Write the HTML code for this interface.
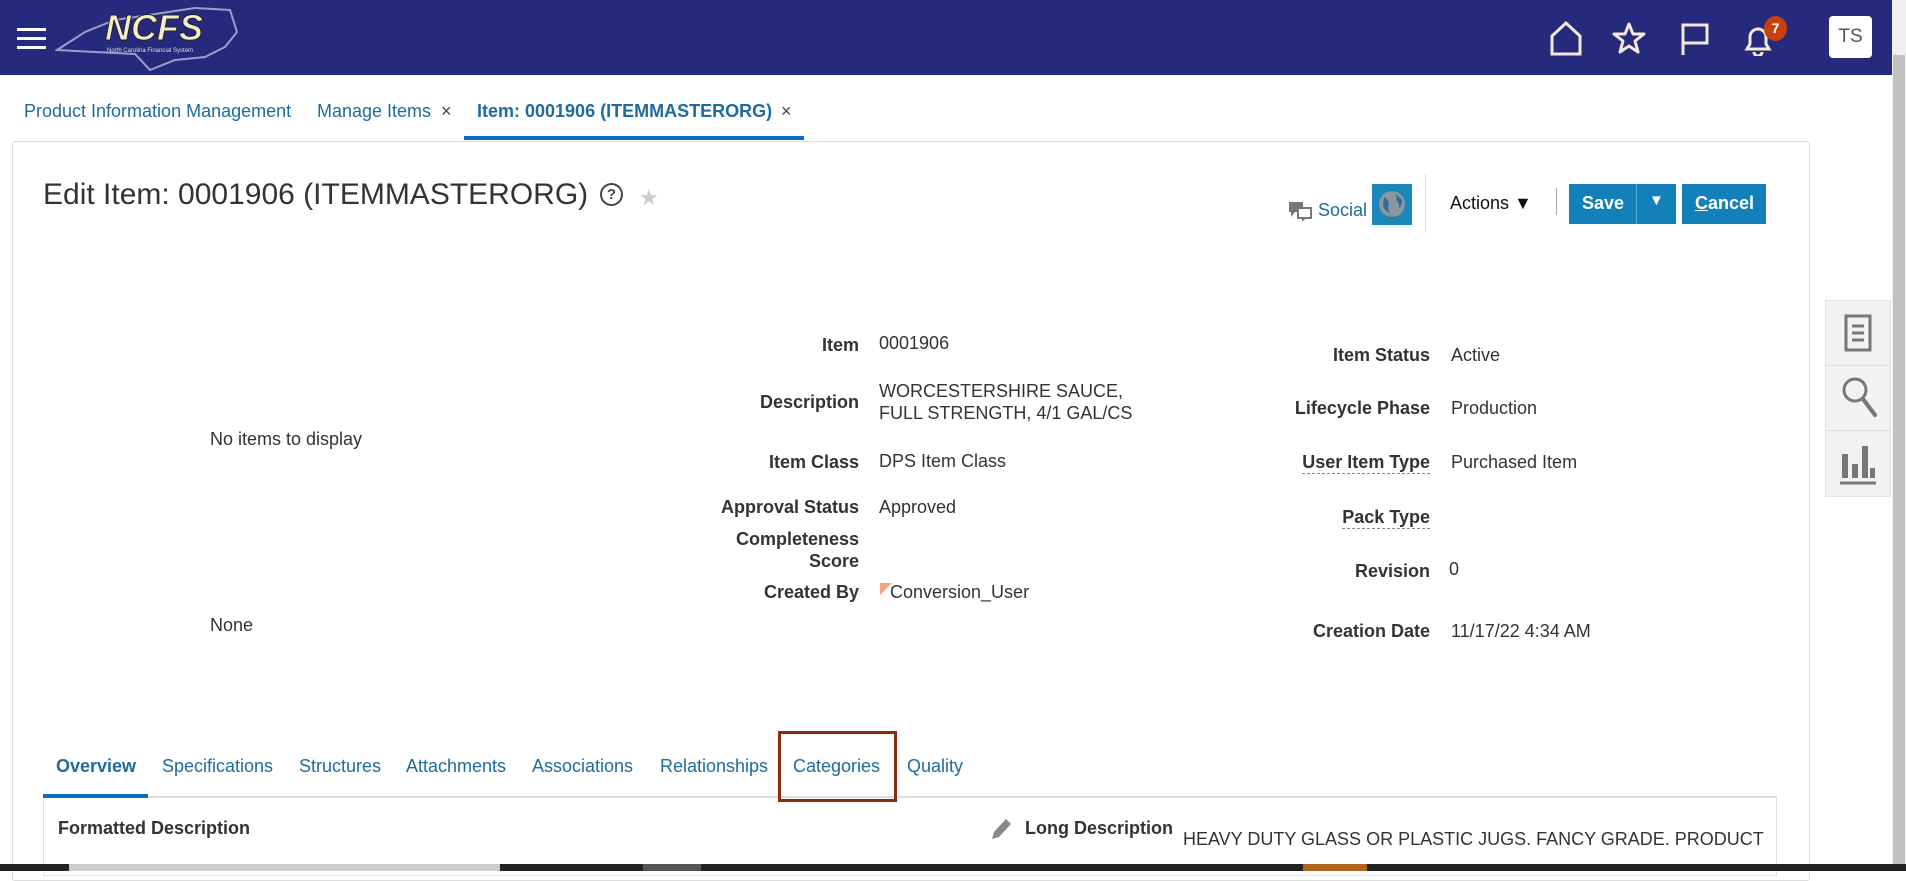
<!DOCTYPE html>
<html><head><meta charset="utf-8"><style>
*{margin:0;padding:0;box-sizing:border-box}
body{width:1906px;height:871px;overflow:hidden;background:#fff;font-family:"Liberation Sans",Arial,sans-serif;font-size:18px;color:#333;position:relative}
.a{position:absolute;white-space:nowrap}
.lbl{position:absolute;white-space:nowrap;font-weight:bold;color:#333;text-align:right}
.val{position:absolute;white-space:nowrap;color:#333}
.link{color:#1f6b9c}
</style></head><body>
<div class="a" style="left:0;top:0;width:1892px;height:75px;background:#262a7c"></div>
<div class="a" style="left:17px;top:28px;width:29px;height:3px;background:#fff;box-shadow:0 9px 0 #fff,0 18px 0 #fff"></div>
<svg class="a" style="left:55px;top:2px" width="185" height="72" viewBox="0 0 185 72">
<path d="M2 48 L30 30 L60 18 L100 12 L140 6 L175 8 L182 30 L170 45 L150 55 L120 58 L95 68 L80 52 L40 50 Z" fill="none" stroke="#9aa0c8" stroke-width="2"/>
<text x="50" y="38" font-family="Liberation Sans" font-weight="bold" font-style="italic" font-size="36" fill="#f3eccc" stroke="#222" stroke-width="1">NCFS</text>
<text x="52" y="50" font-size="6" fill="#ddd" font-family="Liberation Sans">North Carolina Financial System</text>
</svg>
<svg class="a" style="left:1549px;top:20px" width="34" height="36" viewBox="0 0 34 36"><path d="M3 34 V16 L17 3 L31 16 V34 Z" fill="none" stroke="#f3eadc" stroke-width="3"/></svg>
<svg class="a" style="left:1611px;top:21px" width="36" height="34" viewBox="0 0 36 34"><path d="M18 3 L22 13 L33 13 L24 20 L27 31 L18 25 L9 31 L12 20 L3 13 L14 13 Z" fill="none" stroke="#f3eadc" stroke-width="3" stroke-linejoin="round"/></svg>
<svg class="a" style="left:1680px;top:22px" width="30" height="34" viewBox="0 0 30 34"><path d="M3 33 V3 H27 V21 H3" fill="none" stroke="#f3eadc" stroke-width="3"/></svg>
<svg class="a" style="left:1743px;top:24px" width="30" height="32" viewBox="0 0 30 32"><path d="M4 25 H26 L23 20 V13 A8 8 0 0 0 7 13 V20 Z M11 28 A4 4 0 0 0 19 28" fill="none" stroke="#f3eadc" stroke-width="3"/></svg>
<div class="a" style="left:1764px;top:16px;width:23px;height:25px;border-radius:50%;background:#c7410f;color:#fff;font-size:14px;font-weight:bold;text-align:center;line-height:25px">7</div>
<div class="a" style="left:1829px;top:16px;width:43px;height:42px;background:#fff;border-radius:4px;color:#555;font-size:19px;text-align:center;line-height:42px">TS</div>
<div class="a" style="left:1892px;top:0;width:14px;height:871px;background:#f0f0f0"></div>
<div class="a" style="left:1893px;top:55px;width:12px;height:810px;background:#c1c1c1"></div>

<div class="a link" style="left:24px;top:101px">Product Information Management</div>
<div class="a link" style="left:317px;top:101px">Manage Items</div>
<div class="a" style="left:441px;top:101px;color:#444;font-size:18px">×</div>
<div class="a link" style="left:477px;top:101px;font-weight:bold">Item: 0001906 (ITEMMASTERORG)</div>
<div class="a" style="left:781px;top:101px;color:#444;font-size:18px">×</div>
<div class="a" style="left:464px;top:136px;width:340px;height:4px;background:#0a6cbf"></div>

<div class="a" style="left:12px;top:141px;width:1798px;height:740px;border:1px solid #ddd;border-radius:3px"></div>
<div class="a" style="left:43px;top:178px;font-size:30px;color:#333">Edit Item: 0001906 (ITEMMASTERORG)</div>
<div class="a" style="left:600px;top:183px;width:23px;height:23px;border:2px solid #444;border-radius:50%;font-size:15px;text-align:center;line-height:19px;font-weight:bold;color:#444">?</div>
<div class="a" style="left:639px;top:185px;color:#ccc;font-size:22px">★</div>

<svg class="a" style="left:1288px;top:201px" width="28" height="22" viewBox="0 0 28 22"><rect x="1" y="1" width="14" height="10" fill="#777"/><path d="M3 11 L3 16 L7 11" fill="#777"/><rect x="10" y="7" width="13" height="10" fill="#fff" stroke="#777" stroke-width="2"/><path d="M14 17 L14 21 L18 17" fill="#777"/></svg>
<div class="a link" style="left:1318px;top:200px;font-size:18px">Social</div>
<div class="a" style="left:1372px;top:184px;width:40px;height:41px;background:#1a87b8"></div>
<svg class="a" style="left:1379px;top:191px" width="26" height="26" viewBox="0 0 26 26"><circle cx="13" cy="13" r="13" fill="#8a96a0"/><path d="M5 6 Q9 8 10 13 Q8 17 11 22 Q6 20 4 15 Z M15 3 Q19 6 17 9 Q21 12 20 18 Q23 14 23 10 Q21 5 15 3Z" fill="#2d6f94"/></svg>
<div class="a" style="left:1425px;top:174px;width:1px;height:59px;background:#ddd"></div>
<div class="a" style="left:1450px;top:193px;color:#111;font-size:18px">Actions ▼</div>
<div class="a" style="left:1556px;top:188px;width:1px;height:27px;background:#aaa"></div>
<div class="a" style="left:1569px;top:184px;width:107px;height:40px;background:#1480b9"></div>
<div class="a" style="left:1582px;top:193px;color:#fff;font-weight:bold;font-size:18px">Save</div>
<div class="a" style="left:1636px;top:184px;width:1px;height:40px;background:#5aa8d0"></div>
<div class="a" style="left:1649px;top:192px;color:#fff;font-size:15px">▼</div>
<div class="a" style="left:1682px;top:184px;width:84px;height:40px;background:#1480b9"></div>
<div class="a" style="left:1695px;top:193px;color:#fff;font-weight:bold;font-size:18px"><u>C</u>ancel</div>

<div class="a" style="left:210px;top:429px">No items to display</div>
<div class="a" style="left:210px;top:615px">None</div>

<div class="lbl" style="right:1047px;top:335px">Item</div>
<div class="val" style="left:879px;top:333px">0001906</div>
<div class="lbl" style="right:1047px;top:392px">Description</div>
<div class="val" style="left:879px;top:380px;line-height:22px">WORCESTERSHIRE SAUCE,<br>FULL STRENGTH, 4/1 GAL/CS</div>
<div class="lbl" style="right:1047px;top:452px">Item Class</div>
<div class="val" style="left:879px;top:451px">DPS Item Class</div>
<div class="lbl" style="right:1047px;top:497px">Approval Status</div>
<div class="val" style="left:879px;top:497px">Approved</div>
<div class="lbl" style="right:1047px;top:528px;line-height:22px">Completeness<br>Score</div>
<div class="lbl" style="right:1047px;top:582px">Created By</div>
<div class="a" style="left:880px;top:583px;width:0;height:0;border-top:12px solid #f4a57e;border-right:12px solid transparent"></div>
<div class="val" style="left:890px;top:582px">Conversion_User</div>

<div class="lbl" style="right:476px;top:345px">Item Status</div>
<div class="val" style="left:1451px;top:345px">Active</div>
<div class="lbl" style="right:476px;top:398px">Lifecycle Phase</div>
<div class="val" style="left:1451px;top:398px">Production</div>
<div class="lbl" style="right:476px;top:452px;border-bottom:1px dashed #888">User Item Type</div>
<div class="val" style="left:1451px;top:452px">Purchased Item</div>
<div class="lbl" style="right:476px;top:507px;border-bottom:1px dashed #888">Pack Type</div>
<div class="lbl" style="right:476px;top:561px">Revision</div>
<div class="val" style="left:1449px;top:559px">0</div>
<div class="lbl" style="right:476px;top:621px">Creation Date</div>
<div class="val" style="left:1451px;top:621px">11/17/22 4:34 AM</div>

<div class="a" style="left:1825px;top:300px;width:66px;height:197px;background:#f2f2f2;border:1px solid #e2e2e2"></div>
<div class="a" style="left:1826px;top:365px;width:64px;height:1px;background:#ddd"></div>
<div class="a" style="left:1826px;top:430px;width:64px;height:1px;background:#ddd"></div>
<svg class="a" style="left:1843px;top:313px" width="30" height="40" viewBox="0 0 30 40"><rect x="3" y="3" width="24" height="34" fill="none" stroke="#777" stroke-width="3"/><path d="M9 13 H21 M9 20 H21 M9 27 H21" stroke="#777" stroke-width="3"/></svg>
<svg class="a" style="left:1840px;top:375px" width="38" height="44" viewBox="0 0 38 44"><circle cx="15" cy="15" r="11" fill="none" stroke="#777" stroke-width="3"/><path d="M23 24 L35 40" stroke="#777" stroke-width="4" stroke-linecap="round"/></svg>
<svg class="a" style="left:1838px;top:442px" width="40" height="44" viewBox="0 0 40 44"><path d="M4 12 H10 V36 H4 Z M14 22 H20 V36 H14 Z M24 4 H30 V36 H24 Z M32 26 H37 V36 H32 Z" fill="#777"/><path d="M2 41 H38" stroke="#777" stroke-width="3"/></svg>

<div class="a link" style="left:56px;top:756px;font-weight:bold">Overview</div>
<div class="a link" style="left:162px;top:756px">Specifications</div>
<div class="a link" style="left:299px;top:756px">Structures</div>
<div class="a link" style="left:406px;top:756px">Attachments</div>
<div class="a link" style="left:532px;top:756px">Associations</div>
<div class="a link" style="left:660px;top:756px">Relationships</div>
<div class="a link" style="left:793px;top:756px">Categories</div>
<div class="a link" style="left:907px;top:756px">Quality</div>
<div class="a" style="left:43px;top:796px;width:1734px;height:80px;border:1px solid #e0e0e0;border-top:2px solid #ddd"></div>
<div class="a" style="left:43px;top:794px;width:105px;height:4px;background:#0a6cbf"></div>
<div class="a" style="left:778px;top:731px;width:119px;height:71px;border:3px solid #8b2a0e"></div>
<div class="a" style="left:58px;top:818px;font-weight:bold">Formatted Description</div>
<svg class="a" style="left:989px;top:816px" width="24" height="26" viewBox="0 0 24 26"><path d="M3 23 L5 16 L17 3 L22 8 L10 21 Z" fill="#888"/></svg>
<div class="a" style="left:1025px;top:818px;font-weight:bold">Long Description</div>
<div class="a" style="left:1183px;top:829px">HEAVY DUTY GLASS OR PLASTIC JUGS. FANCY GRADE. PRODUCT</div>
<div class="a" style="left:0;top:864px;width:1906px;height:7px;background:#222"></div>
<div class="a" style="left:69px;top:864px;width:431px;height:7px;background:#ccc"></div>
<div class="a" style="left:643px;top:864px;width:58px;height:7px;background:#555"></div>
<div class="a" style="left:1303px;top:864px;width:64px;height:7px;background:#b0641f"></div>
</body></html>
